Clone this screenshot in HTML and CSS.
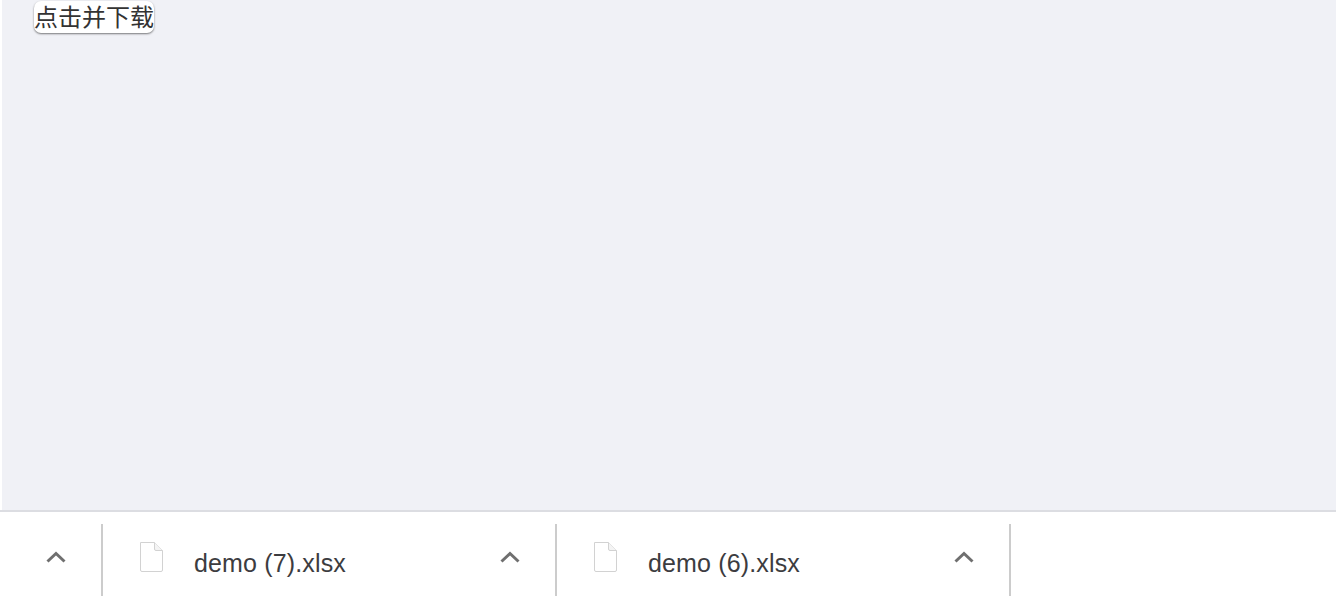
FILE: index.html
```html
<!DOCTYPE html>
<html lang="zh">
<head>
  <meta charset="UTF-8">
  <title>点击并下载</title>
  <link rel="stylesheet" href="styles.css">
</head>
<body>
  <div class="page">
    <button class="download-button">点击并下载</button>
  </div>

  <!-- download shelf -->
  <div class="shelf">
    <div class="shelf-start">
      <svg class="chevron" width="20" height="12" viewBox="0 0 20 12"><path d="M1.5 10.5 10 2.500l8.500 8" /></svg>
    </div>
    <div class="shelf-item">
      <svg class="file-icon" width="26" height="34" viewBox="0 0 26 34"><path class="sheet" d="M2.500 2.500h14l8 8v19.500a1.500 1.500 0 0 1-1.500 1.500H4a1.500 1.500 0 0 1-1.500-1.500z" /><path class="fold" d="M16.500 2.500v6.500a1.500 1.500 0 0 0 1.500 1.500h6.500" /></svg>
      <span class="file-name">demo (7).xlsx</span>
      <svg class="chevron" width="20" height="12" viewBox="0 0 20 12"><path d="M1.5 10.5 10 2.500l8.500 8" /></svg>
    </div>
    <div class="shelf-item">
      <svg class="file-icon" width="26" height="34" viewBox="0 0 26 34"><path class="sheet" d="M2.500 2.500h14l8 8v19.500a1.500 1.500 0 0 1-1.500 1.500H4a1.500 1.500 0 0 1-1.500-1.500z" /><path class="fold" d="M16.500 2.500v6.500a1.500 1.500 0 0 0 1.500 1.500h6.500" /></svg>
      <span class="file-name">demo (6).xlsx</span>
      <svg class="chevron" width="20" height="12" viewBox="0 0 20 12"><path d="M1.5 10.5 10 2.500l8.500 8" /></svg>
    </div>
  </div>
</body>
</html>
```

FILE: styles.css
```css
html, body {
  height: 100%;
}

body {
  margin: 0;
  display: flex;
  flex-direction: column;
  background: white;
  overflow: hidden;
  font-family: "Liberation Sans", "Noto Sans CJK SC", sans-serif;
}

.page {
  height: 510px;
  margin-left: 2px;
  padding: 1px 0 0 32px;
  box-sizing: border-box;
  background-color: #f0f1f6;
}

.download-button {
  display: block;
  width: 120px;
  height: 32px;
  padding: 0 0 2px;
  border: none;
  border-radius: 7px;
  background-color: white;
  box-shadow: 0 1px 2px rgba(0, 0, 0, 0.5);
  color: #333;
  font-family: "Noto Sans CJK SC", sans-serif;
  font-size: 24px;
  line-height: 30px;
  white-space: nowrap;
}

.shelf {
  display: flex;
  height: 84px;
  padding-top: 12px;
  box-sizing: border-box;
  border-top: 2px solid #dcdde2;
}

.shelf-start {
  width: 103px;
  height: 72px;
  padding: 27px 0 0 46px;
  box-sizing: border-box;
  border-right: 2px solid #cccccc;
}

.shelf-item {
  display: flex;
  width: 454px;
  height: 72px;
  box-sizing: border-box;
  padding-left: 35px;
  border-right: 2px solid #cccccc;
}

.file-icon {
  margin-top: 16px;
}

.file-name {
  width: 306px;
  margin-left: 30px;
  margin-top: 25px;
  color: #3c3c40;
  font-size: 25px;
  letter-spacing: 0.15px;
  line-height: 28px;
  white-space: nowrap;
}

.shelf-item .chevron {
  margin-top: 27px;
}

.chevron {
  display: block;
  flex-shrink: 0;
}

.chevron path {
  fill: none;
  stroke: #6f6f6f;
  stroke-width: 3;
}

.sheet {
  fill: white;
  stroke: #d2d2d2;
  stroke-width: 1;
}

.fold {
  fill: #f4f4f4;
  stroke: #d2d2d2;
  stroke-width: 1;
}
```
